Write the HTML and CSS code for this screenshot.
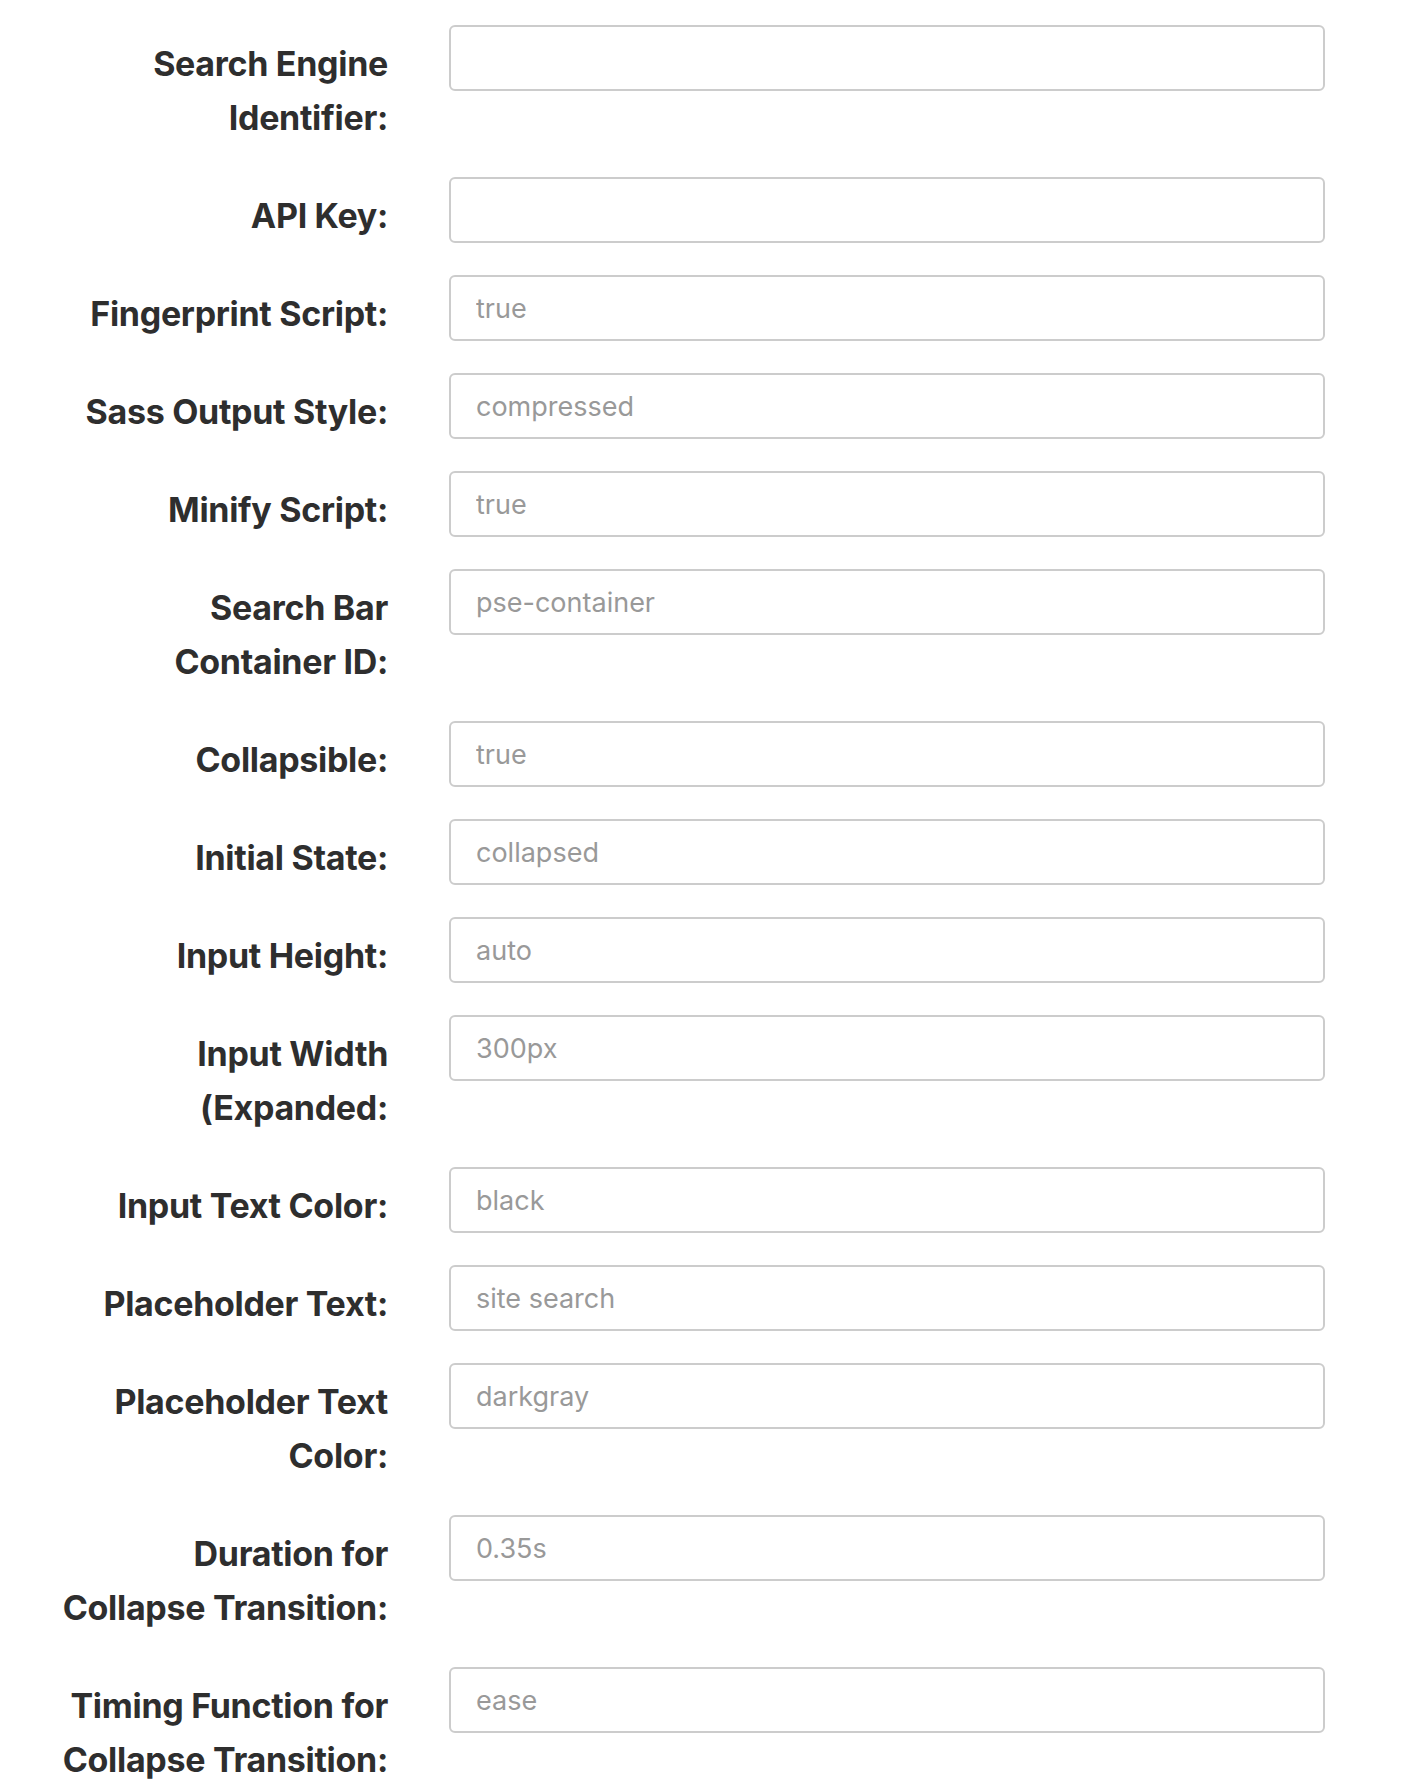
FILE: index.html
```html
<!DOCTYPE html>
<html lang="en">
<head>
<meta charset="utf-8">
<title>Settings</title>
<link rel="stylesheet" href="styles.css">
</head>
<body>
<form class="settings">
  <div class="row"><label class="label">Search Engine<br>Identifier:</label><input class="field" type="text"></div>
  <div class="row"><label class="label">API Key:</label><input class="field" type="text"></div>
  <div class="row"><label class="label">Fingerprint Script:</label><input class="field" type="text" placeholder="true"></div>
  <div class="row"><label class="label">Sass Output Style:</label><input class="field" type="text" placeholder="compressed"></div>
  <div class="row"><label class="label">Minify Script:</label><input class="field" type="text" placeholder="true"></div>
  <div class="row"><label class="label">Search Bar<br>Container ID:</label><input class="field" type="text" placeholder="pse-container"></div>
  <div class="row"><label class="label">Collapsible:</label><input class="field" type="text" placeholder="true"></div>
  <div class="row"><label class="label">Initial State:</label><input class="field" type="text" placeholder="collapsed"></div>
  <div class="row"><label class="label">Input Height:</label><input class="field" type="text" placeholder="auto"></div>
  <div class="row"><label class="label">Input Width<br>(Expanded:</label><input class="field" type="text" placeholder="300px"></div>
  <div class="row"><label class="label">Input Text Color:</label><input class="field" type="text" placeholder="black"></div>
  <div class="row"><label class="label">Placeholder Text:</label><input class="field" type="text" placeholder="site search"></div>
  <div class="row"><label class="label">Placeholder Text<br>Color:</label><input class="field" type="text" placeholder="darkgray"></div>
  <div class="row"><label class="label">Duration for<br>Collapse Transition:</label><input class="field" type="text" placeholder="0.35s"></div>
  <div class="row"><label class="label">Timing Function for<br>Collapse Transition:</label><input class="field" type="text" placeholder="ease"></div>
</form>
</body>
</html>
```
FILE: styles.css
```css
html, body {
  margin: 0;
  padding: 0;
  background: #ffffff;
}
body {
  font-family: "Inter", "Noto Sans", sans-serif;
  color: #333333;
}
.settings {
  display: flex;
  flex-direction: column;
  padding-top: 25px;
}
.row {
  display: flex;
  align-items: flex-start;
  gap: 61px;
  margin-bottom: 32px;
}
.label {
  flex: 0 0 388px;
  box-sizing: border-box;
  text-align: right;
  white-space: nowrap;
  padding-top: 12px;
  font-size: 34px;
  line-height: 54px;
  font-weight: 700;
  color: #2e2e2e;
  letter-spacing: -0.3px;
}
.field {
  box-sizing: border-box;
  width: 876px;
  height: 66px;
  margin: 0;
  padding: 0 25px;
  border: 2px solid #cccccc;
  border-radius: 6px;
  background: #ffffff;
  font-family: "Inter", "Noto Sans", sans-serif;
  font-size: 27px;
  color: #333333;
  outline: none;
}
.field::placeholder {
  color: #999999;
  opacity: 1;
}
```
